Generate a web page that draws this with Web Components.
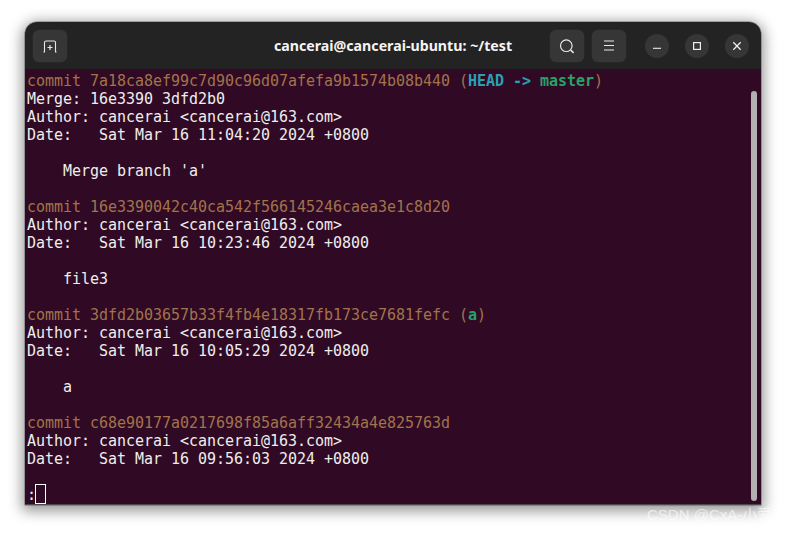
<!DOCTYPE html>
<html><head><meta charset="utf-8"><style>
html,body{margin:0;padding:0;background:#fff;width:786px;height:533px;overflow:hidden}
</style></head><body>
<desk-top>
<term-window title="cancerai@cancerai-ubuntu: ~/test">
<term-log></term-log>
</term-window>
<span slot="mark">CSDN @CxA-小爱</span>
</desk-top>
<script>
class DeskTop extends HTMLElement{constructor(){super();this.attachShadow({mode:'open'}).innerHTML=`<style>
:host{display:block;position:relative;width:786px;height:533px;padding:22px 0 0 25px;box-sizing:border-box}
.mark{position:absolute;left:647px;top:506px;font:15px/18px "Liberation Sans",sans-serif;font-family:"Liberation Sans","Noto Sans CJK SC",sans-serif;color:rgba(255,255,255,.62);white-space:nowrap}
</style><slot></slot><div class="mark"><slot name="mark"></slot></div>`}}
customElements.define('desk-top',DeskTop);

class IconBtn extends HTMLElement{constructor(){super();this.attachShadow({mode:'open'}).innerHTML=`<style>
:host{display:flex;align-items:center;justify-content:center;width:34px;height:32px;background:#363636;border-radius:6px;box-shadow:0 0 0 .5px #2c2c2c}
:host([round]){width:24px;height:24px;border-radius:50%;box-shadow:none}
svg{display:block}
</style><slot></slot>`}}
customElements.define('icon-btn',IconBtn);

class TermWindow extends HTMLElement{constructor(){super();const t=this.getAttribute('title');this.removeAttribute('title');this.attachShadow({mode:'open'}).innerHTML=`<style>
:host{display:flex;flex-direction:column;width:736px;height:483px;border-radius:12px 12px 0 0;overflow:visible;box-shadow:0 3px 14px 3px rgba(0,0,0,.42),0 0 0 .5px rgba(0,0,0,.45)}
header{flex:none;height:47px;background:#232323;border-radius:12px 12px 0 0;display:flex;align-items:center;padding:1px 12px 0 8px;box-sizing:border-box;position:relative;gap:8px}
h1{position:absolute;left:0;right:0;top:15px;margin:0;text-align:center;font:700 14.2px/18px "Noto Sans",sans-serif;color:#f4f4f4}
.sp{flex:1}
.wc{display:flex;gap:16px;margin-left:11px}
main{flex:1;min-height:0;background:#300a24;position:relative;border-bottom:1px solid #4a4a4a}
.thumb{position:absolute;right:4px;top:22px;bottom:3px;width:6px;border-radius:3px;background:#b3aeb1}
</style>
<header>
<icon-btn><svg width="16" height="16" viewBox="0 0 16 16" fill="none" stroke="#e8e8e8" stroke-width="1.1"><path d="M1.5 14H2.5V4.5Q2.5 3 4 3H12Q13.5 3 13.5 4.5V14H14.5"/><path d="M8 7V12M5.5 9.5H10.5" stroke-width="1.2"/></svg></icon-btn>
<h1>${t}</h1>
<span class="sp"></span>
<icon-btn><svg width="18" height="18" viewBox="0 0 18 18" fill="none" stroke="#e8e8e8" stroke-width="1.2"><circle cx="8.3" cy="8.7" r="5.8"/><path d="M12.6 13L15.6 15.8" stroke-width="1.6"/></svg></icon-btn>
<icon-btn><svg width="16" height="16" viewBox="0 0 16 16" fill="none" stroke="#eaeaea" stroke-width="1.1"><path d="M3 3H13M3 7.5H13M3 12H13"/></svg></icon-btn>
<div class="wc">
<icon-btn round><svg width="12" height="12" viewBox="0 0 12 12" fill="none" stroke="#eee" stroke-width="1.1"><path d="M2 8.3H10"/></svg></icon-btn>
<icon-btn round><svg width="12" height="12" viewBox="0 0 12 12" fill="none" stroke="#eee" stroke-width="1.2"><rect x="2.6" y="2.6" width="6.8" height="6.8"/></svg></icon-btn>
<icon-btn round><svg width="12" height="12" viewBox="0 0 12 12" fill="none" stroke="#eee" stroke-width="1.3"><path d="M2.3 2.3L9.7 9.7M9.7 2.3L2.3 9.7"/></svg></icon-btn>
</div>
</header>
<main><slot></slot><div class="thumb"></div></main>`}}
customElements.define('term-window',TermWindow);

class TermLog extends HTMLElement{constructor(){super();
const c=s=>`<span class="y">${s}</span>`;
const au='Author: cancerai &lt;cancerai@163.com&gt;';
const lines=[
c('commit 7a18ca8ef99c7d90c96d07afefa9b1574b08b440 (')+'<b class="h">HEAD -&gt; </b><b class="g">master</b>'+c(')'),
'Merge: 16e3390 3dfd2b0',au,'Date:   Sat Mar 16 11:04:20 2024 +0800','',"    Merge branch 'a'",'',
c('commit 16e3390042c40ca542f566145246caea3e1c8d20'),au,'Date:   Sat Mar 16 10:23:46 2024 +0800','','    file3','',
c('commit 3dfd2b03657b33f4fb4e18317fb173ce7681fefc (')+'<b class="g">a</b>'+c(')'),au,'Date:   Sat Mar 16 10:05:29 2024 +0800','','    a','',
c('commit c68e90177a0217698f85a6aff32434a4e825763d'),au,'Date:   Sat Mar 16 09:56:03 2024 +0800','',
':<i class="cur"></i>'];
this.attachShadow({mode:'open'}).innerHTML=`<style>
:host{display:block;padding:3px 0 0 2px;font:15px/18px "DejaVu Sans Mono",monospace;letter-spacing:-.03px;color:#eeeeec}
div{height:18px;white-space:pre}
.y{color:#a2734c}.h{color:#2aa1b3;font-weight:700}.g{color:#26a269;font-weight:700}
.cur{display:inline-block;width:11px;height:20px;box-sizing:border-box;border:1px solid #fff;vertical-align:top;margin:-2px 0 0 -1px}
</style>`+lines.map(l=>`<div>${l}</div>`).join('')}}
customElements.define('term-log',TermLog);
</script>
</body></html>
